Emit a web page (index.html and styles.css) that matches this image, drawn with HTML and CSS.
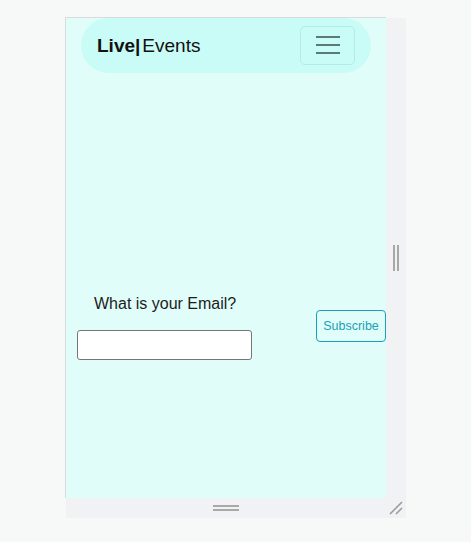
FILE: index.html
```html
<!DOCTYPE html>
<html lang="en">
<head>
<meta charset="utf-8">
<title>Live Events</title>
<link rel="stylesheet" href="styles.css">
</head>
<body>
<div class="stage">
  <div class="device">
    <div class="viewport">
      <nav class="navbar">
        <a class="brand"><b>Live|</b><span class="brand-rest">Events</span></a>
        <button class="toggler" aria-label="Menu">
          <svg width="24" height="20" viewBox="0 0 24 20"><path d="M0 2h24M0 10h24M0 18h24" stroke="#5a7a77" stroke-width="2.2"/></svg>
        </button>
      </nav>
      <form class="signup">
        <div class="field">
          <label class="label" for="email">What is your Email?</label>
          <input class="input" id="email" type="email">
        </div>
        <button class="subscribe" type="button">Subscribe</button>
      </form>
    </div>
    <div class="gutter-right"><span class="vgrip"></span></div>
    <div class="gutter-bottom"><span class="hgrip"></span></div>
    <div class="corner">
      <svg width="14" height="14" viewBox="0 0 14 14"><path d="M1 13L13 1M7 13L13 7" stroke="#9a9a9a" stroke-width="1.5"/></svg>
    </div>
  </div>
</div>
</body>
</html>
```
FILE: styles.css
```css
html, body {
  margin: 0;
  padding: 0;
  background: #f7f8f8;
  font-family: "Liberation Sans", Arial, sans-serif;
}
.stage {
  padding: 17px 0 0 65px;
}
.device {
  display: grid;
  grid-template-columns: 321px 20px;
  grid-template-rows: 481px 20px;
}
.viewport {
  border-left: 1px solid #d9dcdc;
  border-top: 1px solid #d9dcdc;
  background: #e1fdfa;
  overflow: hidden;
}
.navbar {
  margin: 0 15px;
  height: 55px;
  border-radius: 28px;
  background: #c9fcf6;
  padding: 0 16px;
  display: flex;
  align-items: center;
  justify-content: space-between;
}
.brand {
  font-size: 19px;
  color: #111;
}
.brand b {
  font-weight: 700;
}
.brand-rest {
  margin-left: 2px;
}
.toggler {
  width: 55px;
  height: 39px;
  margin-top: -1px;
  border: 1px solid #b3ece6;
  border-radius: 5px;
  background: transparent;
  display: flex;
  align-items: center;
  justify-content: center;
  padding: 0;
}
.signup {
  margin-top: 219px;
  padding-left: 11px;
  display: flex;
  align-items: center;
  justify-content: space-between;
}
.field {
  display: flex;
  flex-direction: column;
  gap: 14px;
}
.label {
  padding-left: 17px;
  font-size: 16px;
  line-height: 24px;
  color: #1c1c1c;
}
.input {
  width: 175px;
  height: 30px;
  box-sizing: border-box;
  border: 1px solid #767676;
  border-radius: 3px;
  background: #fff;
  margin: 0;
}
.subscribe {
  box-sizing: border-box;
  height: 32px;
  width: 70px;
  padding: 0;
  border: 1px solid #17a2b8;
  border-radius: 4px;
  background: transparent;
  color: #17a2b8;
  font-family: "Liberation Sans", Arial, sans-serif;
  font-size: 12.5px;
}
.gutter-right {
  margin-top: 1px;
  background: #f1f2f3;
  display: flex;
  justify-content: center;
  align-items: center;
}
.vgrip {
  width: 2px;
  height: 26px;
  border-left: 2px solid #a8a8a8;
  border-right: 2px solid #a8a8a8;
}
.gutter-bottom {
  margin-left: 1px;
  background: #f1f2f3;
  display: flex;
  justify-content: center;
  align-items: center;
}
.hgrip {
  width: 26px;
  height: 2px;
  border-top: 2px solid #a8a8a8;
  border-bottom: 2px solid #a8a8a8;
}
.corner {
  background: #f1f2f3;
  display: flex;
  align-items: center;
  justify-content: center;
}
```
